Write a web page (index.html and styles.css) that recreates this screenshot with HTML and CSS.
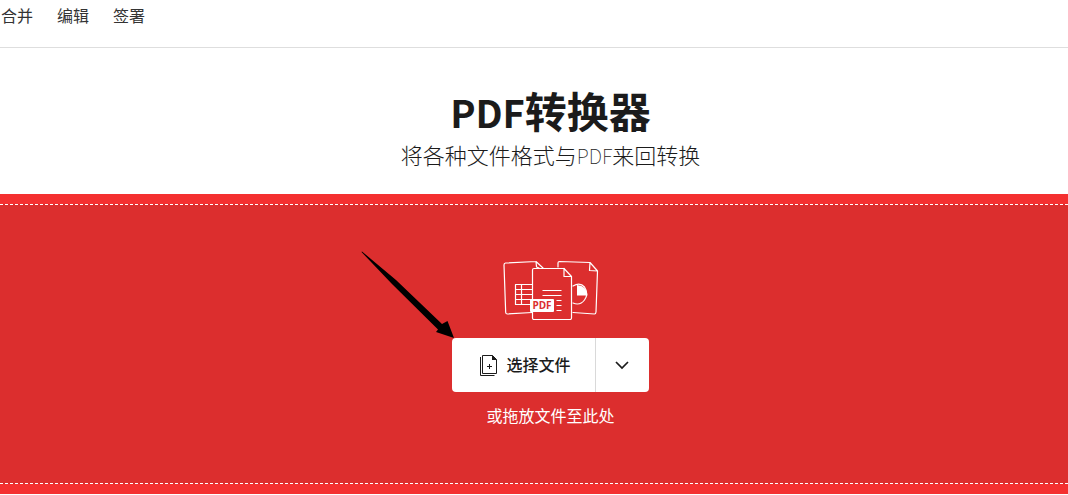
FILE: index.html
```html
<!DOCTYPE html>
<html lang="zh-CN">
<head>
<meta charset="utf-8">
<meta name="viewport" content="width=device-width, initial-scale=1">
<title>PDF转换器</title>
<link rel="stylesheet" href="styles.css">
</head>
<body>
<header class="topbar">
  <nav class="nav">
    <a class="nav-link" href="#merge">合并</a>
    <a class="nav-link" href="#edit">编辑</a>
    <a class="nav-link" href="#sign">签署</a>
  </nav>
</header>
<main class="main">
  <section class="intro">
    <h1 class="title"><span class="title-latin">PDF</span>转换器</h1>
    <p class="subtitle">将各种文件格式与<span class="subtitle-latin">PDF</span>来回转换</p>
  </section>
  <section class="drop">
    <div class="drop-area">
      <svg class="files" width="96" height="60" viewBox="0 0 96 60" fill="none" stroke="#fff" stroke-width="1.2" stroke-linejoin="round" stroke-linecap="round" aria-hidden="true">
        <path d="M29 52.500L4.500 54Q2.800 54 2.700 52.500L1 5Q1 3.200 2.500 3L33 1.500L40 8M33 1.500L33.500 7L36 8"/>
        <path d="M29 24.500H12.500V44.500H27M18.500 24.500V44.500M12.500 29.500H29M12.500 34.500H29M12.500 39.500H28"/>
        <path d="M55 7V3Q55 1.500 56.500 1.500L87 2.500L94.500 11L93 52Q92.800 54 91.500 54L70 52.500M87 2.500L86.500 10.500L94.500 11"/>
        <path d="M70 26Q77 22 81.500 27Q86 34 81.500 40Q77 46 70 43"/>
        <path d="M74 25V35.500H84.500Q84 26 74 25Z" fill="#fff" stroke="none"/>
        <path d="M61.500 8.500H31Q29.500 8.500 29.500 10V58Q29.500 59.500 31 59.500H67Q68.500 59.500 68.500 58V16.500L61 8.500V16.500H68.500" fill="#dc2e2e"/>
        <path d="M39.500 30.500H58.500M39.500 35.500H58.500M53.500 40.500H58.500M53.500 45.500H58.500M53.500 50.500H58.500" stroke-linecap="butt"/>
        <rect x="27" y="39" width="24" height="13" rx="1" fill="#fff" stroke="none"/>
        <text class="files-tag" x="39" y="49" text-anchor="middle">PDF</text>
      </svg>
      <div class="picker">
        <button class="choose" type="button">
          <svg width="17" height="21" viewBox="0 0 17 21" fill="none" stroke="#1b1b1b" aria-hidden="true">
            <path d="M12.500 .5H2.500V18.500H16.500V4.500ZM.5 2V20.500H14.500M9.500 9V14M7 11.500H12"/>
            <path d="M12 0V5H17Z" fill="#1b1b1b" stroke="none"/>
          </svg>
          <span class="choose-label">选择文件</span>
        </button>
        <button class="more" type="button" aria-label="更多来源">
          <svg width="14" height="9" viewBox="0 0 14 9" fill="none" stroke="#1b1b1b" stroke-width="1.7" aria-hidden="true"><path d="M1 1L7 7L13 1"/></svg>
        </button>
        <svg class="pointer" width="94" height="88" viewBox="0 0 94 88" aria-hidden="true"><path d="M1 .5L35 29L81 73L86.500 70L93 87L75 81L77 78.500L31 33L.5 1Z"/></svg>
      </div>
      <p class="hint">或拖放文件至此处</p>
    </div>
  </section>
</main>
</body>
</html>
```
FILE: styles.css
```css
* {
  box-sizing: border-box;
}

body {
  margin: 0;
  background: #fff;
  color: #1b1b1b;
  font-family: "Noto Sans CJK SC", sans-serif;
  font-size: 16px;
  line-height: 24px;
}

h1,
p {
  margin: 0;
}

.topbar {
  padding: 3px 0 20px 1px;
  border-bottom: 1px solid #dedede;
}

.nav {
  display: flex;
  gap: 24px;
}

.nav-link {
  color: #333;
  font-weight: 400;
  text-decoration: none;
}

.intro {
  padding: 35px 0 22px 33px;
  text-align: center;
}

.title {
  font-size: 42px;
  font-weight: 700;
  line-height: 53px;
}

.title-latin {
  font-size: 38px;
}

.subtitle {
  font-size: 22px;
  font-weight: 300;
  line-height: 33px;
}

.subtitle-latin {
  font-size: 20px;
  font-weight: 100;
}

.drop {
  padding: 10px 0;
  background: #f43030;
}

.drop-area {
  display: flex;
  flex-direction: column;
  align-items: center;
  padding: 55px 0 56px 33px;
  border: dashed #fff;
  border-width: 1px 0;
  background: #dc2e2e;
}

.files-tag {
  fill: #dc2e2e;
  stroke: none;
  font-family: "Open Sans", sans-serif;
  font-size: 10px;
  font-weight: 700;
}

.picker {
  position: relative;
  display: flex;
  height: 54px;
  margin-top: 18px;
}

.choose,
.more {
  display: flex;
  align-items: center;
  border: 0;
  background: #fff;
  color: #1b1b1b;
  cursor: pointer;
}

.choose {
  gap: 9px;
  padding: 0 24px 0 28px;
  border-right: 1px solid #d9d9d9;
  border-radius: 4px 0 0 4px;
  font: inherit;
  font-weight: 500;
}

.choose-label {
  padding-bottom: 2px;
}

.more {
  padding: 0 20px 0 19px;
  border-radius: 0 4px 4px 0;
}

.pointer {
  position: absolute;
  right: 100%;
  bottom: 100%;
  margin: 0 -3px -1px 0;
}

.hint {
  margin-top: 11px;
  color: #fff;
}
```
